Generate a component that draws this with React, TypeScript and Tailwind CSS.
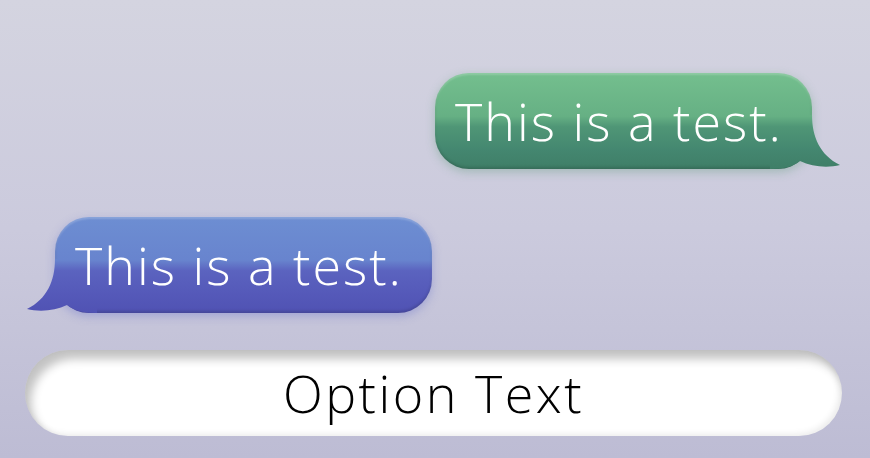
const font = { fontFamily: '"Open Sans", "Noto Sans", sans-serif' };

type Tone = {
  id: string;
  stops: [number, string][];
};

const green: Tone = {
  id: 'gt',
  stops: [
    [0, '#74bf8e'],
    [0.45, '#66b084'],
    [0.56, '#4f9676'],
    [0.8, '#448770'],
    [1, '#3f7e67'],
  ],
};

const blue: Tone = {
  id: 'bt',
  stops: [
    [0, '#6d8ed2'],
    [0.45, '#6884ce'],
    [0.56, '#5b63bf'],
    [0.8, '#5559b9'],
    [1, '#5052b3'],
  ],
};

function Tail({ tone, d }: { tone: Tone; d: string }) {
  return (
    <svg viewBox="0 0 72 96" width="72" height="96">
      <defs>
        <linearGradient id={tone.id} gradientUnits="userSpaceOnUse" x1="0" y1="0" x2="0" y2="96">
          {tone.stops.map(([o, c]) => (
            <stop key={o} offset={o} stopColor={c} />
          ))}
        </linearGradient>
      </defs>
      <path d={d} fill={`url(#${tone.id})`} />
    </svg>
  );
}

function GreenBubble() {
  return (
    <div className="relative w-[377px] h-[96px]">
      <div className="relative h-full w-full rounded-[34px] flex items-center pl-[20px] shadow-[0_3px_10px_rgba(80,150,110,0.35),inset_0_-2px_3px_rgba(0,0,0,0.15),inset_0_2px_2px_rgba(255,255,255,0.2)] bg-[linear-gradient(to_bottom,#74bf8e_0%,#66b084_45%,#4f9676_56%,#448770_80%,#3f7e67_100%)]">
        <span className="relative z-10 text-white text-[52px] font-light leading-none tracking-[2px]" style={font}>
          This is a test.
        </span>
      </div>
      <div className="absolute right-[-30px] top-0">
        <Tail tone={green} d="M0 42 L42 42 C42 64 50 82 70 92 C58 95 42 94 30 88 C24 93 14 96 0 96 Z" />
      </div>
    </div>
  );
}

function BlueBubble() {
  return (
    <div className="relative w-[377px] h-[96px]">
      <div className="relative h-full w-full rounded-[34px] flex items-center pl-[20px] shadow-[0_3px_10px_rgba(90,100,200,0.35),inset_0_-2px_3px_rgba(0,0,0,0.15),inset_0_2px_2px_rgba(255,255,255,0.2)] bg-[linear-gradient(to_bottom,#6d8ed2_0%,#6884ce_45%,#5b63bf_56%,#5559b9_80%,#5052b3_100%)]">
        <span className="relative z-10 text-white text-[52px] font-light leading-none tracking-[2px]" style={font}>
          This is a test.
        </span>
      </div>
      <div className="absolute left-[-30px] top-0">
        <Tail tone={blue} d="M72 42 L30 42 C30 64 22 82 2 92 C14 95 30 94 42 88 C48 93 58 96 72 96 Z" />
      </div>
    </div>
  );
}

export default function App() {
  return (
    <div className="w-[870px] h-[458px] overflow-hidden bg-[linear-gradient(to_bottom,#d4d4e0,#cbcadd_50%,#bdbcd4)] flex flex-col">
      <div className="flex justify-end pr-[58px] pt-[73px]">
        <GreenBubble />
      </div>
      <div className="flex pl-[55px] pt-[48px]">
        <BlueBubble />
      </div>
      <div className="pl-[25px] pr-[28px] pt-[37px]">
        <div className="h-[86px] rounded-full bg-white flex items-center justify-center shadow-[inset_6px_9px_10px_rgba(0,0,0,0.24),inset_-3px_-2px_6px_rgba(0,0,0,0.08)]">
          <span className="text-black text-[52px] font-light leading-none tracking-[2.5px]" style={font}>
            Option Text
          </span>
        </div>
      </div>
    </div>
  );
}
